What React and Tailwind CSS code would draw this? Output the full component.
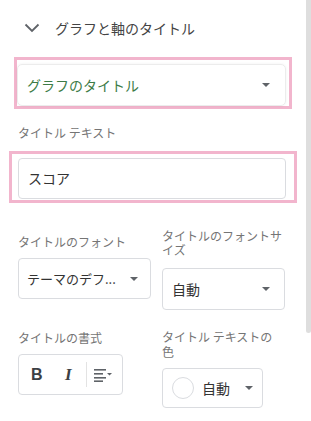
import React from "react";

const font = { fontFamily: '"Noto Sans CJK JP", "Noto Sans", sans-serif' };

function Caret({ className = "" }) {
  return (
    <svg width="8" height="4" viewBox="0 0 8 4" className={className}>
      <path d="M0 0 L8 0 L4 4 Z" fill="#5f6368" />
    </svg>
  );
}

export default function App() {
  return (
    <div className="w-[311px] h-[421px] bg-white flex overflow-hidden text-[#3c4043]" style={font}>
      <div className="flex-1 flex flex-col">
        <div className="flex items-center h-[24px] mt-[16px] pl-[24px]">
          <svg width="16" height="10" viewBox="0 0 16 10" className="mr-[15px]">
            <path d="M1.5 1.5 L8 8 L14.5 1.5" fill="none" stroke="#5f6368" strokeWidth="1.8" />
          </svg>
          <span className="text-[14px] text-[#444]">グラフと軸のタイトル</span>
        </div>

        <div className="ml-[14px] mt-[17px] w-[278px] h-[52px] border-[3px] border-[#f2b5cd] flex flex-col justify-end pr-[3px]">
          <div className="h-[42px] rounded-[5px] border border-[#ececec] shadow-[0_0_3px_rgba(0,0,0,0.06)] flex items-center justify-between pl-[9px] pr-[15px]">
            <span className="text-[14px] text-[#3d7c47]">グラフのタイトル</span>
            <Caret />
          </div>
        </div>

        <div className="ml-[18px] mt-[15px] text-[12px] text-[#757575]">タイトル テキスト</div>

        <div className="ml-[9px] mt-[9px] w-[288px] h-[52px] border-[3px] border-[#f2b5cd] pl-[6px] pt-[4px] pr-[8px]">
          <div className="h-[41px] rounded-[4px] border border-[#dadce0] flex items-center pl-[9px]">
            <span className="text-[14px] text-[#333]">スコア</span>
          </div>
        </div>

        <div className="flex mt-[26px] ml-[18px]">
          <div className="w-[144px] flex flex-col">
            <div className="text-[12px] text-[#757575] leading-[15px] mt-[5px]">タイトルのフォント</div>
            <div className="mt-[9px] w-[133px] h-[41px] rounded-[4px] border border-[#dadce0] flex items-center justify-between pl-[8px] pr-[12px]">
              <span className="text-[13px] text-[#333] whitespace-nowrap">テーマのデフ...</span>
              <Caret />
            </div>
          </div>
          <div className="flex flex-col">
            <div className="text-[12px] text-[#757575] leading-[14px] w-[121px]">タイトルのフォントサイズ</div>
            <div className="mt-[11px] w-[123px] h-[42px] rounded-[4px] border border-[#dadce0] flex items-center justify-between pl-[9px] pr-[14px]">
              <span className="text-[14px] text-[#333] mt-[1px]">自動</span>
              <Caret />
            </div>
          </div>
        </div>

        <div className="flex mt-[19px] ml-[18px]">
          <div className="w-[144px] flex flex-col">
            <div className="text-[12px] text-[#757575] leading-[15px] mt-[1px]">タイトルの書式</div>
            <div className="mt-[9px] w-[105px] h-[41px] rounded-[4px] border border-[#dadce0] flex items-center">
              <span className="ml-[12px] w-[12px] text-[16px] font-bold text-[#3c4043]" style={{ fontFamily: '"Liberation Sans", Arial, sans-serif' }}>B</span>
              <span className="ml-[22px] text-[17px] font-bold italic text-[#3c4043]" style={{ fontFamily: '"Liberation Serif", serif' }}>I</span>
              <div className="ml-[14px] w-px h-[25px] bg-[#e3e3e3]" />
              <svg width="19" height="14" viewBox="0 0 19 14" className="ml-[7px]">
                <rect x="0" y="1" width="12" height="1.6" fill="#5f6368" />
                <rect x="0" y="5" width="9" height="1.6" fill="#5f6368" />
                <rect x="0" y="9" width="12" height="1.6" fill="#5f6368" />
                <rect x="0" y="12.4" width="9" height="1.6" fill="#5f6368" />
                <path d="M13 5 L18 5 L15.5 7.5 Z" fill="#5f6368" />
              </svg>
            </div>
          </div>
          <div className="flex flex-col">
            <div className="text-[12px] text-[#757575] leading-[15px] w-[121px]">タイトル テキストの色</div>
            <div className="mt-[9px] w-[101px] h-[40px] rounded-[4px] border border-[#dadce0] flex items-center pl-[9px]">
              <div className="w-[22px] h-[22px] rounded-full border border-[#dadce0] bg-white" />
              <span className="ml-[8px] text-[14px] text-[#333]">自動</span>
              <Caret className="ml-[15px]" />
            </div>
          </div>
        </div>
      </div>
      <div className="w-[5px] h-[333px] bg-[#dedede] rounded-b-[3px]" />
    </div>
  );
}
